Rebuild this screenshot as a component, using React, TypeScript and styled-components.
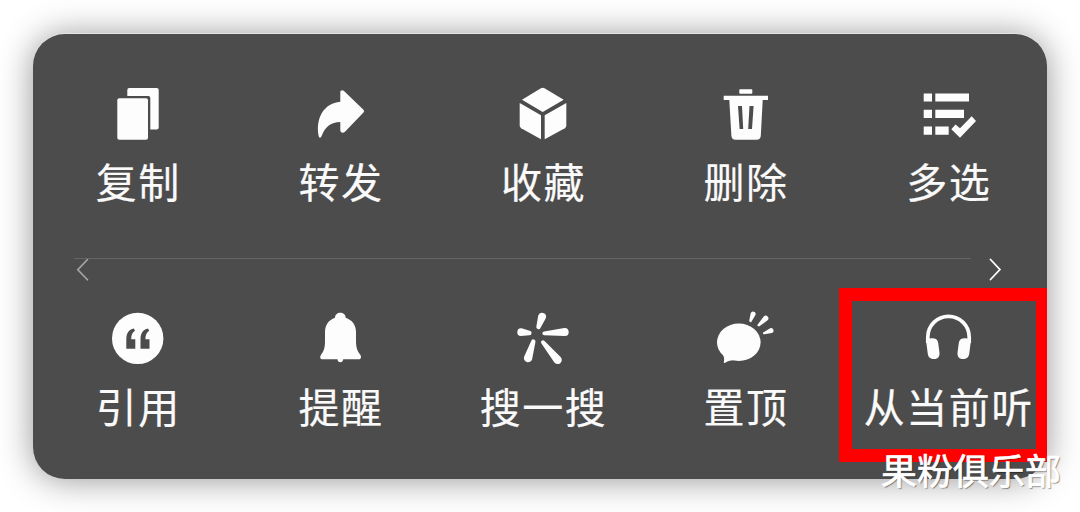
import React from 'react';
import styled, { createGlobalStyle } from 'styled-components';

const GlobalStyle = createGlobalStyle`
  body { margin: 0; background: #fff; }
`;

const Page = styled.main`
  position: relative;
  box-sizing: border-box;
  width: 1080px;
  height: 512px;
  padding: 34px 33px 33px;
  overflow: hidden;
  font-family: 'Noto Sans CJK SC', sans-serif;
`;

const Menu = styled.section`
  display: flex;
  flex-direction: column;
  box-sizing: border-box;
  height: 445px;
  padding-top: 50px;
  border-radius: 32px;
  background: #4c4c4c;
  box-shadow: 0 -1px 0 #e4e4e4, 0 1px 34px rgba(0, 0, 0, 0.42);
`;

const Row = styled.div`
  display: grid;
  grid-template-columns: repeat(5, 202.6px);
  height: 122px;
  padding-left: 3.5px;
`;

const Item = styled.button`
  position: relative;
  display: flex;
  flex-direction: column;
  align-items: center;
  padding: 0;
  border: 0;
  background: none;
  color: #fafafa;
  font-family: inherit;
`;

const Glyph = styled.svg`
  display: block;
  flex: none;
  width: 60px;
  height: 60px;
  fill: #fdfdfd;
`;

const Label = styled.span`
  margin-top: 7px;
  padding-left: 1px;
  font-size: 41px;
  line-height: 58px;
  letter-spacing: 1.5px;
  white-space: nowrap;
  -webkit-text-stroke: 0.2px #fafafa;
`;

const Highlight = styled.span`
  position: absolute;
  top: -21px;
  left: -7.9px;
  box-sizing: border-box;
  width: 208px;
  height: 174px;
  border: 13px solid #fe0000;
  border-right-width: 11px;
  pointer-events: none;
`;

const Divider = styled.div`
  display: flex;
  justify-content: space-between;
  height: 51px;
  margin: 52px 44px 0 43px;
`;

const Rule = styled.hr`
  flex: 1;
  height: 1px;
  margin: 0 18px 0 -16px;
  border: 0;
  background: #646464;
`;

const Chevron = styled.svg<{ $tone: string; $weight: number }>`
  display: block;
  width: 14px;
  height: 24px;
  fill: none;
  stroke: ${({ $tone }) => $tone};
  stroke-width: ${({ $weight }) => $weight};
  stroke-linecap: round;
`;

const Watermark = styled.div`
  position: absolute;
  left: 881px;
  top: 443px;
  color: #fff;
  font-size: 36px;
  line-height: 52px;
  white-space: nowrap;
  -webkit-text-stroke: 0.7px #fff;
  text-shadow: 1px 1px 1px rgba(0, 0, 0, 0.5);
`;

type PetalProps = { from: [number, number]; to: [number, number]; r1: number; r2: number };

/** A tapered stroke with round ends: radius r1 at `from`, r2 at `to`. */
const Petal = ({ from, to, r1, r2 }: PetalProps) => {
  const dx = to[0] - from[0];
  const dy = to[1] - from[1];
  const len = Math.hypot(dx, dy);
  const nx = -dy / len;
  const ny = dx / len;
  const p = (c: [number, number], r: number) => `${c[0] + nx * r} ${c[1] + ny * r}`;
  return (
    <path
      d={`M${p(from, r1)}A${r1} ${r1} 0 0 1 ${p(from, -r1)}L${p(to, -r2)}A${r2} ${r2} 0 0 1 ${p(to, r2)}Z`}
    />
  );
};

const quoteMark = 'M18.3 39.7V30.5C18.3 24.5 20.8 20.7 25.8 19.6L27 21.8C24.3 23.5 23.3 26 23.2 30.3H27.3V39.7Z';

const icons: Record<string, React.ReactNode> = {
  copy: (
    <>
      <rect x="9.3" y="14.3" width="30.7" height="41.4" rx="2" />
      <path d="M19.3 12V6a2 2 0 0 1 2-2H48.7a2 2 0 0 1 2 2V43.5a2 2 0 0 1-2 2H42.3V14a2 2 0 0 0-2-2Z" />
    </>
  ),
  forward: (
    <path d="M30.3 17.7V8.2C30.3 6.3 32.5 5.6 34 7L53.2 25.4C54.3 26.5 54.3 27.7 53.2 28.8L35 47.7C33.5 49.3 30.3 49 30.3 46.3V38C21 38.2 15.2 42.5 11.6 52C10.8 54.3 9 54.2 8.6 51.8C5.6 34 13.5 19.5 30.3 17.7Z" />
  ),
  cube: (
    <>
      <path d="M27.9 4.3Q29.7 3.3 31.5 4.3L50.7 15.7L29.7 27.9L9 15.7Z" />
      <path d="M6.7 19L28 31.2V55.3L8.2 44.2Q6.7 43.3 6.7 41.5Z" />
      <path d="M53.3 19L31.7 31.2V55.3L51.8 44.2Q53.3 43.3 53.3 41.5Z" />
    </>
  ),
  trash: (
    <>
      <rect x="23.3" y="5.2" width="13" height="4.5" rx=".8" />
      <path
        fillRule="evenodd"
        d="M7.7 11.7H52V16H46.7L44.8 51.7Q44.5 55.7 40.5 55.7H19.5Q15.7 55.7 15.4 51.7L13.3 16H7.7ZM22 22L23.6 45H27.2L26 22ZM33.5 22L32.2 45H36L37.6 22Z"
      />
    </>
  ),
  select: (
    <path d="M5.7 9.4H14V17.4H5.7ZM17.3 9.4H51V17.4H17.3ZM5.7 25.8H14V34H5.7ZM17.3 25.8H46V34H17.3ZM5.7 42.6H14V50.7H5.7ZM17.3 42.6H30.7V50.7H17.3ZM33.3 45.2L37.5 40.5L42 44.3L53.7 32.3L58 37L42 53.7Z" />
  ),
  quote: (
    <>
      <circle cx="29.7" cy="29.4" r="25.7" />
      <g fill="#4c4c4c">
        <path d={quoteMark} />
        <path d={quoteMark} transform="translate(14.2 0)" />
      </g>
    </>
  ),
  bell: (
    <path d="M25 8.7C25 5.7 27.3 3.7 30.3 3.7S35.7 5.7 35.7 8.7C42 10.8 46 16 46 23V32C46 39 47.5 42.2 50.4 46C51.6 47.8 51 50.3 48.7 50.3H33.2C33 52.3 32 53.3 30.3 53.3S27.7 52.3 27.5 50.3H12.5C10.2 50.3 9.6 47.8 10.9 46C13.8 42.2 15 39 15 32V23C15 16 18.8 10.8 25 8.7Z" />
  ),
  search: (
    <>
      <Petal from={[29, 7.9]} to={[25.5, 18]} r1={4} r2={2.2} />
      <Petal from={[51.6, 23]} to={[31.3, 24.4]} r1={4.1} r2={1.9} />
      <Petal from={[8.2, 23.1]} to={[16.4, 24]} r1={3.9} r2={2.2} />
      <Petal from={[15.1, 49]} to={[20.3, 32.6]} r1={4.2} r2={2.2} />
      <Petal from={[44.6, 50.9]} to={[30, 33.3]} r1={4.2} r2={2} />
    </>
  ),
  pin: (
    <>
      <ellipse cx="22.8" cy="33.3" rx="21.8" ry="18.7" />
      <path d="M6 44C8.3 47.7 8.5 50 7.8 53.2Q8 54.3 9.2 53.7C11.5 52.3 13.5 51.5 18 51.3Z" />
      <Petal from={[37.1, 5]} to={[34.5, 11.8]} r1={2.5} r2={1.3} />
      <Petal from={[49.7, 9.3]} to={[42.8, 16.2]} r1={2.7} r2={1.3} />
      <Petal from={[55, 21.7]} to={[48, 24.2]} r1={2.5} r2={1.1} />
    </>
  ),
  headphones: (
    <>
      <path d="M9.8 34V28A20.7 20.7 0 0 1 51.2 28V34" fill="none" stroke="#fdfdfd" strokeWidth="3.7" />
      <path d="M8 31C8 30 9.5 29.8 12 29.5C17 28.9 19.6 30.2 20.2 34L21.4 43C22 47.5 20 50 16.2 50C12.3 50 10.5 48.6 9.8 45Z" />
      <path d="M53 31C53 30 51.5 29.8 49 29.5C44 28.9 41.4 30.2 40.8 34L39.6 43C39 47.5 41 50 44.8 50C48.7 50 50.5 48.6 51.2 45Z" />
    </>
  ),
};

type Action = { icon: string; label: string; highlighted?: boolean };

const primary: Action[] = [
  { icon: 'copy', label: '复制' },
  { icon: 'forward', label: '转发' },
  { icon: 'cube', label: '收藏' },
  { icon: 'trash', label: '删除' },
  { icon: 'select', label: '多选' },
];

const secondary: Action[] = [
  { icon: 'quote', label: '引用' },
  { icon: 'bell', label: '提醒' },
  { icon: 'search', label: '搜一搜' },
  { icon: 'pin', label: '置顶' },
  { icon: 'headphones', label: '从当前听', highlighted: true },
];

const ActionRow = ({ actions }: { actions: Action[] }) => (
  <Row>
    {actions.map(({ icon, label, highlighted }) => (
      <Item key={icon}>
        <Glyph viewBox="0 0 60 60">{icons[icon]}</Glyph>
        <Label>{label}</Label>
        {highlighted && <Highlight />}
      </Item>
    ))}
  </Row>
);

export default function App() {
  return (
    <Page>
      <GlobalStyle />
      <Menu>
        <ActionRow actions={primary} />
        <Divider>
          <Chevron viewBox="0 0 14 24" $tone="#a8a8a8" $weight={1.6}>
            <path d="M11.5 1.5L1.8 11.7L11.5 21.8" />
          </Chevron>
          <Rule />
          <Chevron viewBox="0 0 14 24" $tone="#ffffff" $weight={1.8}>
            <path d="M1.5 1.5L10.9 11.5L1.5 21.5" />
          </Chevron>
        </Divider>
        <ActionRow actions={secondary} />
      </Menu>
      <Watermark>果粉俱乐部</Watermark>
    </Page>
  );
}
